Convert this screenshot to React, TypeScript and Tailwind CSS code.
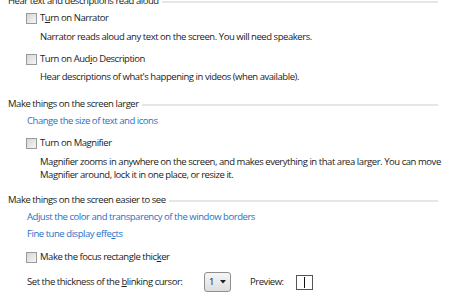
import type { ReactNode } from 'react';

const font = { fontFamily: '"Open Sans", "Noto Sans", Arial, sans-serif' };

function Header({ children, className }: { children: ReactNode; className: string }) {
  return (
    <div className={`flex items-center h-[14px] pl-[8px] pr-[18px] text-[#1b1b1b] ${className}`}>
      <span className="whitespace-nowrap">{children}</span>
      <div className="flex-1 ml-[3px] mt-[2px] h-[2px] bg-[#e6e6e6]" />
    </div>
  );
}

function Check({ children, className }: { children: ReactNode; className: string }) {
  return (
    <div className={`flex items-center h-[14px] pl-[26px] gap-[3px] whitespace-nowrap ${className}`}>
      <span className="w-[11px] h-[11px] border border-[#9a9a9a] bg-gradient-to-br from-[#d6d6d6] to-[#f6f6f6]" />
      <span>{children}</span>
    </div>
  );
}

function Link({ children, className }: { children: ReactNode; className: string }) {
  return <div className={`h-[14px] pl-[27px] whitespace-nowrap text-[#2470c8] ${className}`}>{children}</div>;
}

function U({ children }: { children: ReactNode }) {
  return <span className="underline underline-offset-[1px]">{children}</span>;
}

export default function App() {
  return (
    <div
      className="w-[456px] h-[300px] bg-white overflow-hidden text-[9.5px] tracking-[-0.45px] leading-[14px] text-[#222]"
      style={font}
    >
      <div className="-mt-[6px]">
        <Header className="">Hear text and descriptions read aloud</Header>
        <Check className="mt-[3px]">
          T<U>u</U>rn on Narrator
        </Check>
        <div className="mt-[5px] h-[14px] pl-[40px] whitespace-nowrap">
          Narrator reads aloud any text on the screen. You will need speakers.
        </div>
        <Check className="mt-[8px]">
          Turn on Aud<U>i</U>o Description
        </Check>
        <div className="mt-[4px] h-[14px] pl-[40px] whitespace-nowrap">
          Hear descriptions of what's happening in videos (when available).
        </div>

        <Header className="mt-[13px]">Make things on the screen larger</Header>
        <Link className="mt-[3px]">Change the size of text and icons</Link>
        <Check className="mt-[8px]">
          Turn on Ma<U>g</U>nifier
        </Check>
        <div className="mt-[5px] pl-[40px] leading-[13px] whitespace-nowrap">
          <div>Magnifier zooms in anywhere on the screen, and makes everything in that area larger. You can move</div>
          <div>Magnifier around, lock it in one place, or resize it.</div>
        </div>

        <Header className="mt-[12px]">Make things on the screen easier to see</Header>
        <Link className="mt-[3px]">Adjust the color and transparency of the window borders</Link>
        <Link className="mt-[3px]">
          Fine tune display effe<U>c</U>ts
        </Link>
        <Check className="mt-[9px]">
          Make the focus rectangle thic<U>k</U>er
        </Check>
        <div className="mt-[8px] flex items-center h-[20px] pl-[27px] whitespace-nowrap">
          <span className="w-[177px]">
            Set the thickness of the <U>b</U>linking cursor:
          </span>
          <div className="flex items-center justify-between w-[27px] h-[20px] px-[4px] rounded-[3px] border border-[#8e8e8e] bg-gradient-to-b from-[#f6f6f6] to-[#dedede] text-[#111]">
            <span>1</span>
            <svg width="6" height="4" viewBox="0 0 6 4">
              <path d="M0 0h6L3 3.5z" fill="#222" />
            </svg>
          </div>
          <span className="ml-[19px]">Preview:</span>
          <div className="ml-[12px] flex items-center justify-center w-[17px] h-[15px] border border-[#555]">
            <div className="w-px h-[11px] bg-[#111]" />
          </div>
        </div>
      </div>
    </div>
  );
}
